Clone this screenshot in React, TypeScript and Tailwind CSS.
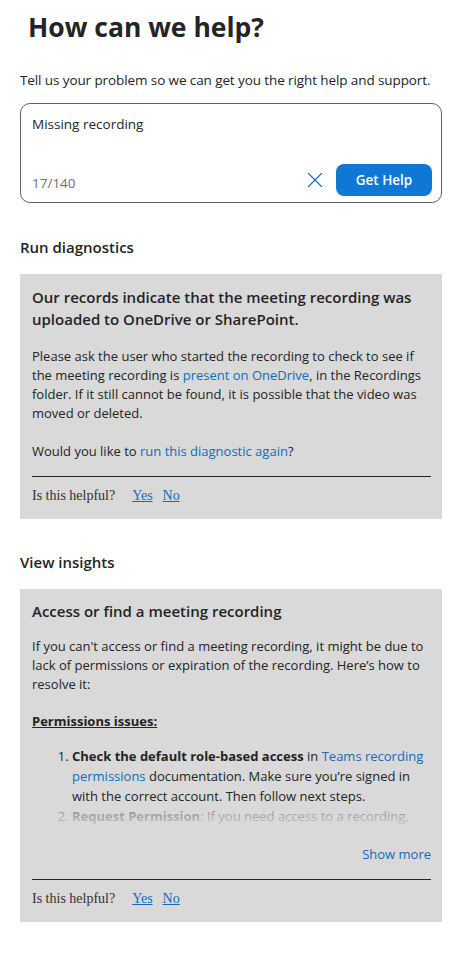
import { X } from 'lucide-react'

const sans = { fontFamily: '"Open Sans", "Noto Sans", sans-serif' }

function Helpful() {
  return (
    <div>
      <div className="h-px bg-[#242424] mt-[15px]" />
      <div className="flex items-center h-[36px] font-['Liberation_Serif',serif] text-[14px] text-[#323130]">
        <span>Is this helpful?</span>
        <a className="ml-[17px] text-[#0f6cbd] underline">Yes</a>
        <a className="ml-[10px] text-[#0f6cbd] underline">No</a>
      </div>
    </div>
  )
}

export default function App() {
  return (
    <div className="bg-white min-h-screen w-[459px] pl-[20px] pr-[17px] text-[#242424]" style={sans}>
      <h1 className="pt-[8px] pl-[8px] text-[26.5px] font-bold leading-[38px] text-[#242424]">
        How can we help?
      </h1>
      <p className="mt-[25px] text-[13.5px] leading-[19px] tracking-[-0.1px]">
        Tell us your problem so we can get you the right help and support.
      </p>
      <div className="mt-[13px] h-[100px] rounded-[10px] border border-[#616161] pl-[11px] pr-[9px] pt-[10px] pb-[6px] flex flex-col justify-between">
        <div className="text-[13.5px] leading-[20px]">Missing recording</div>
        <div className="flex items-center">
          <span className="text-[13.5px] text-[#707070] flex-1 pt-[6px]">17/140</span>
          <X className="w-[26px] h-[26px] text-[#0f6cbd] mr-[8px]" strokeWidth={1} />
          <button className="w-[96px] h-[32px] rounded-[8px] bg-[#0f78d4] text-white text-[13.5px] font-semibold">
            Get Help
          </button>
        </div>
      </div>

      <h2 className="mt-[33px] text-[15px] font-semibold leading-[22px]">Run diagnostics</h2>
      <div className="mt-[16px] bg-[#d9d9d9] pl-[12px] pr-[11px] pt-[12px] pb-[6px]">
        <div className="text-[15px] font-semibold leading-[22px]">
          Our records indicate that the meeting recording was uploaded to OneDrive or SharePoint.
        </div>
        <p className="mt-[17px] text-[13px] leading-[19px]">
          Please ask the user who started the recording to check to see if the meeting recording is{' '}
          <a className="text-[#0f6cbd]">present on OneDrive</a>, in the Recordings folder. If it still
          cannot be found, it is possible that the video was moved or deleted.
        </p>
        <p className="mt-[19px] text-[13px] leading-[19px]">
          Would you like to <a className="text-[#0f6cbd]">run this diagnostic again</a>?
        </p>
        <Helpful />
      </div>

      <h2 className="mt-[32px] text-[15px] font-semibold leading-[22px]">View insights</h2>
      <div className="mt-[16px] bg-[#d9d9d9] pl-[12px] pr-[11px] pt-[11px] pb-[6px]">
        <div className="text-[15px] font-semibold leading-[22px]">Access or find a meeting recording</div>
        <p className="mt-[15px] text-[13px] leading-[19px]">
          If you can't access or find a meeting recording, it might be due to lack of permissions or
          expiration of the recording. Here’s how to resolve it:
        </p>
        <p className="mt-[18px] text-[13px] leading-[19px] font-bold underline">Permissions issues:</p>
        <div className="relative mt-[15px] h-[80px] overflow-hidden">
          <ol className="list-decimal pl-[40px] text-[13px] leading-[20px]">
            <li>
              <b>Check the default role-based access</b> in{' '}
              <a className="text-[#0f6cbd]">Teams recording permissions</a> documentation. Make sure you’re
              signed in with the correct account. Then follow next steps.
            </li>
            <li>
              <b>Request Permission</b>: If you need access to a recording, ask the owner to share it.
            </li>
          </ol>
          <div className="absolute left-0 right-0 bottom-0 h-[22px] bg-gradient-to-b from-[#d9d9d9]/50 to-[#d9d9d9]/90" />
        </div>
        <div className="text-right mt-[18px] text-[13px] leading-[20px] text-[#0f6cbd]">Show more</div>
        <Helpful />
      </div>
    </div>
  )
}
